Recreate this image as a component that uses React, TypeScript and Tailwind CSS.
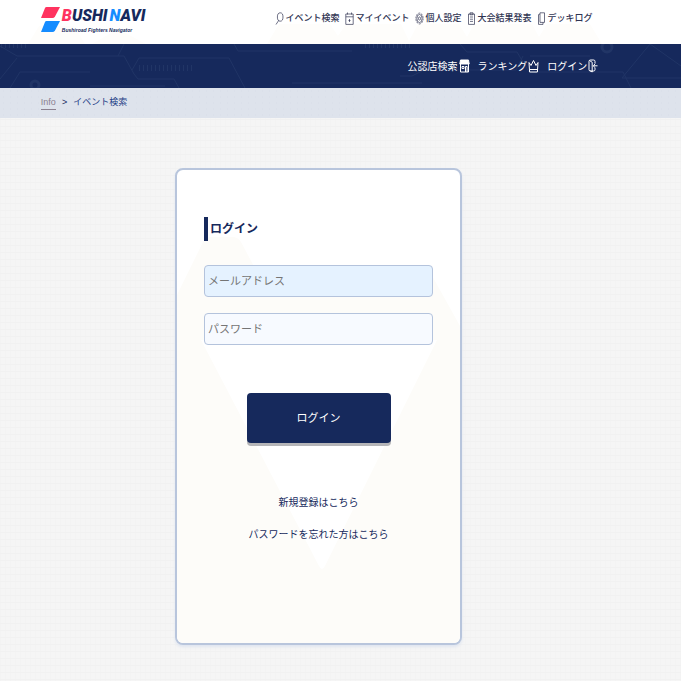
import type { ReactNode } from "react";

const mainLinks = [
  { label: "イベント検索", icon: "search" },
  { label: "マイイベント", icon: "calendar" },
  { label: "個人設定", icon: "gear" },
  { label: "大会結果発表", icon: "clipboard" },
  { label: "デッキログ", icon: "deck" },
];

const subLinks = [
  { label: "公認店検索", icon: "shop" },
  { label: "ランキング", icon: "crown" },
  { label: "ログイン", icon: "login" },
];

const icons: Record<string, ReactNode> = {
  search: (
    <>
      <ellipse cx="5.2" cy="5" rx="2.8" ry="4.2" />
      <path d="M3.6 8.6 1 12.5" />
    </>
  ),
  calendar: (
    <>
      <path d="M.8 2h7.4v10.4H.8zM.8 4.8h7.4M2.5.5v2M6.5.5v2" />
      <path d="M4.5 7v3M3.5 8.5h2" />
    </>
  ),
  gear: (
    <>
      <ellipse cx="4.5" cy="6.5" rx="3.6" ry="5.4" strokeDasharray="2 .8" />
      <ellipse cx="4.5" cy="6.5" rx="2.6" ry="4" />
      <ellipse cx="4.5" cy="6.5" rx="1" ry="1.6" />
    </>
  ),
  clipboard: (
    <>
      <path d="M1.5 2h6v10.4h-6zM3 .8h3v2H3z" />
      <path d="M3 5h3M3 7.2h3M3 9.4h3" />
    </>
  ),
  deck: (
    <>
      <path d="M3 .8h4.5v9.6H3z" />
      <path d="M3 2 1.5 2.6v9.8H6v-2" />
    </>
  ),
  shop: (
    <>
      <path d="M1.5 1h8l.7 4H.8z" fill="currentColor" />
      <path d="M1.5 5v8h8V5M3 7.5h2v2H3zM6.5 13V7.5h1.6V13" />
    </>
  ),
  crown: (
    <>
      <path d="M1 3.5 3 6.5l2.5-5L8 6.5l2-3-.6 9.5H1.6z" />
      <path d="M1.8 10.5h7.4" />
    </>
  ),
  login: (
    <>
      <path d="M7 4.5V2.4Q7 1 5.6 1H2.4Q1 1 1 2.4v8.2Q1 12 2.4 12H4M7 9v1.6Q7 12 5.6 12H4" />
      <path d="m1.5 1.5 2.7 1.8V13l-2.7-1.6M9.5 6.8H5.4M7 4.8 5.4 6.8 7 8.8" />
    </>
  ),
};

function Icon({ name, wide }: { name: string; wide?: boolean }) {
  return (
    <svg
      viewBox={wide ? "0 0 11 14" : "0 0 9 13"}
      className={wide ? "h-[14px] w-[11px] shrink-0" : "h-[13px] w-[9px] shrink-0"}
      fill="none"
      stroke="currentColor"
      strokeWidth={wide ? "1" : "0.7"}
      aria-hidden="true"
    >
      {icons[name]}
    </svg>
  );
}

function Logo() {
  return (
    <a href="#" className="flex items-start gap-px">
      <svg viewBox="0 0 20 27" className="h-[27px] w-5" aria-hidden="true">
        <path d="M5.5 1H19l-5 9.5q-1 1.5-2.5 1.5H0L4 2q.4-1 1.5-1z" fill="#ff335f" />
        <path d="M5.5 15H19l-5 9.5q-1 1.5-2.5 1.5H0l4-10q.4-1 1.5-1z" fill="#158cff" />
      </svg>
      <span className="flex flex-col text-[#16295c] italic">
        <span className="flex gap-[2px] font-[Roboto] text-[16px] leading-5 font-black">
          <span>
            <span className="text-[#ff335f]">B</span>USHI
          </span>
          <span>
            <span className="text-[#158cff]">N</span>AVI
          </span>
        </span>
        <span className="text-[5px] leading-[8px] font-bold">Bushiroad Fighters Navigator</span>
      </span>
    </a>
  );
}

function Circuit() {
  return (
    <svg
      viewBox="0 0 681 44"
      preserveAspectRatio="xMidYMid slice"
      className="absolute inset-0 h-full w-full"
      fill="none"
      stroke="#213566"
      aria-hidden="true"
    >
      <path d="M0 35 17 14M10 44 20 28h70M0 2l17 10h107l10 18 4 5h36l5 9M118 12l6-12M132 26l7-12h90l16 30M90 42h75M234 0l4 7h114M292 39h130" />
      <path d="M139 24h54" strokeWidth="6" strokeDasharray="1 3" />
      <path d="M1 2h26M365 2h45" strokeWidth="4" strokeDasharray="1 3" />
      <path d="M400 32h12l12-6h92l7-14M460 0l7 8h50l12 20h94l8 16M530 12h60M650 0l-28 34h59M650 0l31 22" />
      <circle cx="35" cy="41" r="4" strokeWidth="3" />
      <circle cx="607" cy="3" r="5" strokeWidth="3" />
    </svg>
  );
}

export default function App() {
  return (
    <div className="flex min-h-screen flex-col bg-[#f5f5f5] bg-[linear-gradient(#f1f1f1_1px,transparent_1px),linear-gradient(90deg,#f3f3f3_1px,transparent_1px)] bg-[size:5px_7px] font-['Liberation_Sans','Noto_Sans_CJK_JP',sans-serif] text-[#16295c]">
      <header>
        <div className="relative bg-white">
          <svg viewBox="0 0 681 44" preserveAspectRatio="xMidYMid slice" className="absolute inset-0 h-full w-full" fill="#fefdfb" aria-hidden="true">
            <path d="M28 44 39 26h35l11 18zM92 44l26-15 28 15zM267 44l12-20h51l8 12 8-12h55l8 17 9-17h41l8 13 7-13h58l7 13 8-13h43l12 20z" />
          </svg>
          <div className="relative flex h-11 items-start justify-between pt-[6px] pr-[13%] pl-[6%]">
            <Logo />
            <nav className="flex gap-[6px] pt-1 text-[9px] leading-4 font-medium text-[#303452]">
              {mainLinks.map((link) => (
                <a key={link.icon} href="#" className="flex items-center gap-px whitespace-nowrap">
                  <Icon name={link.icon} />
                  {link.label}
                </a>
              ))}
            </nav>
          </div>
        </div>

        <div className="relative overflow-hidden bg-[#16295c]">
          <Circuit />
          <nav className="relative flex h-11 items-center justify-end gap-2 pr-[12%] text-[10px] text-white">
            {subLinks.map((link) => (
              <a key={link.icon} href="#" className="flex items-center gap-px whitespace-nowrap">
                {link.label}
                <Icon name={link.icon} wide />
              </a>
            ))}
          </nav>
        </div>
      </header>

      <nav aria-label="breadcrumb" className="flex h-[30px] items-center gap-[6px] bg-[#dee3ec] bg-[radial-gradient(#dbe0ea_1px,transparent_1px)] bg-[size:7px_6px] pl-[6%] text-[9px]">
        <a href="#" className="border-b border-[#8b8190] text-[#8b8190]">Info</a>
        <span>&gt;</span>
        <a href="#" className="text-[#1d3d86]">イベント検索</a>
      </nav>

      <main className="flex flex-1 justify-center px-4 pt-[50px] pb-9">
        <section className="relative mr-11 w-full max-w-[287px] overflow-hidden rounded-lg border-2 border-[#b8c5dc] bg-white shadow-[0_2px_3px_#dfe5f0]">
          <svg viewBox="0 0 283 473" preserveAspectRatio="none" className="absolute inset-0 h-full w-full" aria-hidden="true">
            <path d="M0 125 26 72q3-5 9-5h20q6 0 9 5l16 30h173l30 54v317H0z" fill="#fdfcf9" />
            <path d="M24 170h236L148 396q-3 6-6 0z" fill="#fff" />
          </svg>
          <form className="relative flex flex-col px-[27px] pt-[47px] pb-[94px]" onSubmit={(e) => e.preventDefault()}>
            <h1 className="border-l-4 border-[#16295c] pl-[2px] text-[12px] leading-6 font-bold">ログイン</h1>
            <input
              type="email"
              aria-label="メールアドレス"
              placeholder="メールアドレス"
              className="mt-6 h-8 w-full rounded border border-[#b4c3dc] bg-[#e5f2ff] px-[3px] text-[11px] placeholder:text-[#757575]"
            />
            <input
              type="password"
              aria-label="パスワード"
              placeholder="パスワード"
              className="mt-4 h-8 w-full rounded border border-[#b4c3dc] bg-[#f7faff] px-[3px] text-[11px] placeholder:text-[#757575]"
            />
            <button type="submit" className="mt-12 h-[50px] w-36 self-center rounded bg-[#16295c] text-[11px] text-white shadow-[0_3px_0_#b5b5b8]">
              ログイン
            </button>
            <div className="mt-12 flex flex-col items-center gap-2 text-[10px] leading-6">
              <a href="#">新規登録はこちら</a>
              <a href="#">パスワードを忘れた方はこちら</a>
            </div>
          </form>
        </section>
      </main>
    </div>
  );
}
